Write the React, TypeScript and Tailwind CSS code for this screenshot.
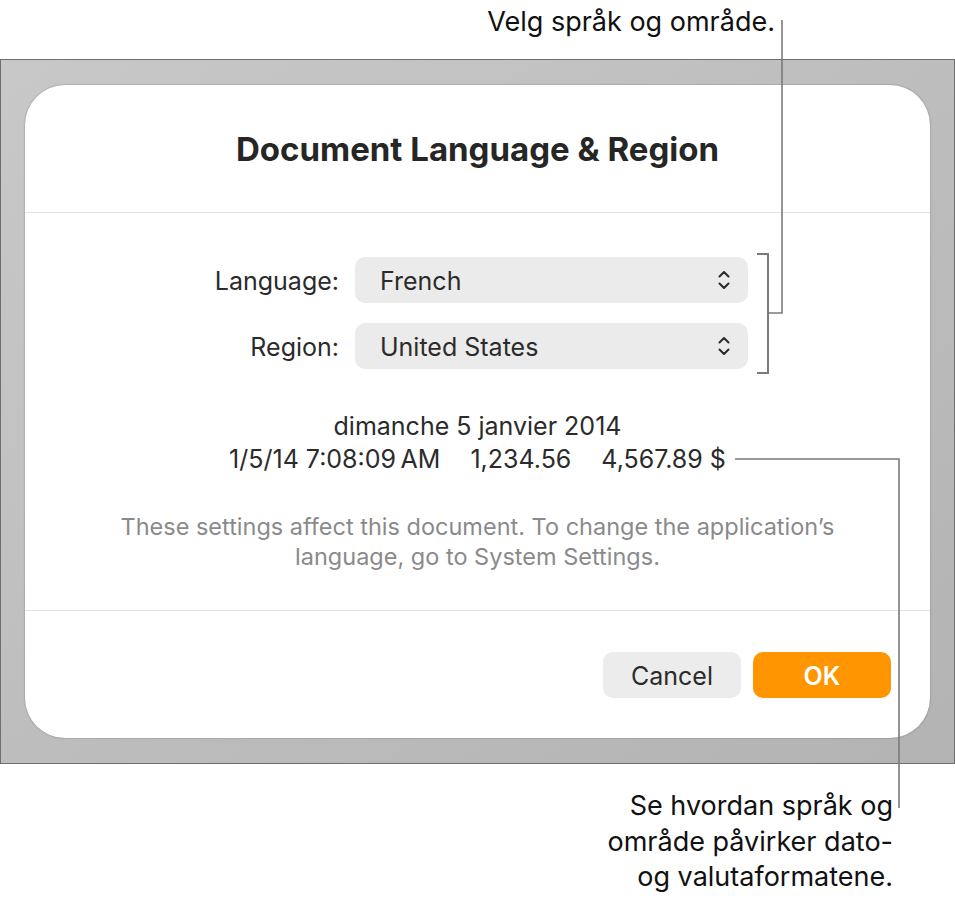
import React from "react";

function UpDown() {
  return (
    <svg width="14" height="22" viewBox="0 0 14 22" fill="none" stroke="#2b2b2b" strokeWidth="2" strokeLinecap="round" strokeLinejoin="round">
      <path d="M2.5 7.5 L7 3 L11.5 7.5" />
      <path d="M2.5 14.5 L7 19 L11.5 14.5" />
    </svg>
  );
}

function Row({ label, value }: { label: string; value: string }) {
  return (
    <div className="flex items-center">
      <div className="w-[150px] pt-[3px] text-right text-[25px] text-[#2b2b2b]">{label}</div>
      <div className="ml-[16px] flex h-[46px] w-[393px] items-center justify-between rounded-[10px] bg-[#ebebeb] pl-[25px] pr-[17px] text-[25px] text-[#2b2b2b]">
        <span className="pt-[3px]">{value}</span>
        <UpDown />
      </div>
    </div>
  );
}

export default function App() {
  return (
    <div className="relative h-[904px] w-[955px] overflow-hidden bg-white font-['Inter',sans-serif] text-black">
      <div className="flex h-[59px] items-start justify-end pr-[180px] pt-[4px] text-[27px] leading-[36px] text-[#111]">
        Velg språk og område.
      </div>

      <div className="h-[705px] w-[955px] border border-[#6e6e6e] bg-gradient-to-br from-[#c8c8c8] to-[#b3b3b3] pl-[24px] pt-[25px]">
        <div className="flex h-[653px] w-[905px] flex-col rounded-[40px] bg-white shadow-[0_0_2px_rgba(0,0,0,0.35)]">
          <div className="flex h-[128px] items-center justify-center border-b border-[#e3e3e3] pt-[2px] text-[33px] font-bold text-[#262626]">
            Document Language &amp; Region
          </div>
          <div className="flex flex-col pl-[164px] pt-[44px]">
            <div className="flex flex-col gap-[20px]">
              <Row label="Language:" value="French" />
              <Row label="Region:" value="United States" />
            </div>
          </div>
          <div className="mt-[41px] flex flex-col items-center text-[25px] leading-[33px] text-[#2b2b2b]">
            <div>dimanche 5 janvier 2014</div>
            <div className="flex gap-[30px]">
              <span>1/5/14 7:08:09&#8201;AM</span>
              <span>1,234.56</span>
              <span>4,567.89 $</span>
            </div>
          </div>
          <div className="mt-[36px] text-center text-[23.5px] leading-[30px] text-[#8a8a8a]">
            These settings affect this document. To change the application’s
            <br />
            language, go to System Settings.
          </div>
          <div className="mt-[38px] border-t border-[#e3e3e3]" />
          <div className="flex justify-end gap-[12px] pr-[39px] pt-[41px]">
            <div className="flex h-[46px] w-[138px] items-center justify-center rounded-[10px] bg-[#ececec] pt-[3px] text-[25px] text-[#2b2b2b]">
              Cancel
            </div>
            <div className="flex h-[46px] w-[138px] items-center justify-center rounded-[10px] bg-[#ff9500] pt-[3px] text-[25px] font-semibold text-white">
              OK
            </div>
          </div>
        </div>
      </div>

      <div className="flex justify-end pr-[62px] pt-[24px] text-right text-[27px] leading-[35.5px] text-[#111]">
        <div>
          Se hvordan språk og
          <br />
          område påvirker dato-
          <br />
          og valutaformatene.
        </div>
      </div>

      <svg className="pointer-events-none absolute left-0 top-0" width="955" height="904" viewBox="0 0 955 904" fill="none">
        <g stroke="#7a7a7a" strokeWidth="1.6">
          <path d="M782 20 V313 H768" />
          <path d="M757 254 H768 V373 H757" strokeWidth="2" />
          <path d="M735 459 H899 V808" />
        </g>
      </svg>
    </div>
  );
}
